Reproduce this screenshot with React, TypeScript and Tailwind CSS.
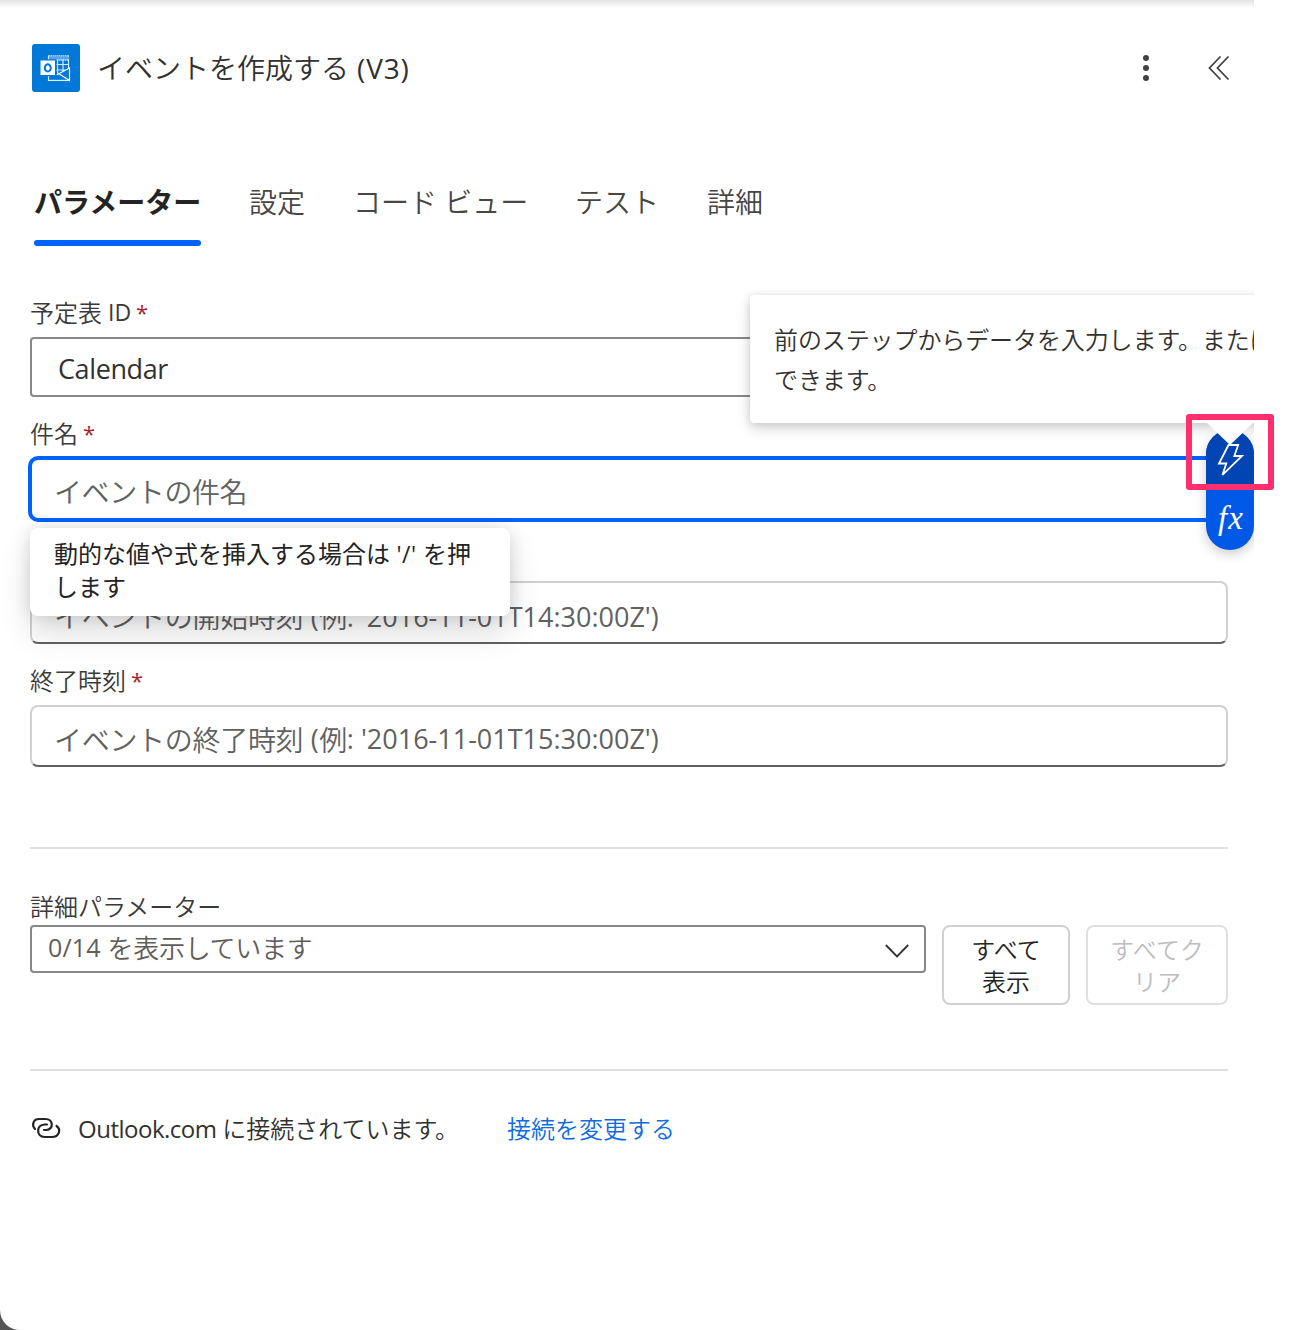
import type { ReactNode } from "react";

function Latin({ children, className = "" }: { children: ReactNode; className?: string }) {
  return <span className={`font-['Open_Sans','Noto_Sans',sans-serif] font-normal ${className}`}>{children}</span>;
}

function OutlookIcon() {
  return (
    <svg width="48" height="48" viewBox="0 0 48 48" className="shrink-0">
      <rect width="48" height="48" rx="3" fill="#0078d7" />
      <g fill="none" stroke="#d5e8fa" strokeWidth="1.2">
        <path d="M36.5 11.5V25M16.5 11.5V36.5H37.5" />
        <path d="M23 20.5H37M23 26H33M25.5 15V28M31 15V27" />
        <path d="M25 28.5L37.5 36.5V24L24.5 31" stroke="#fff" />
      </g>
      <path d="M17 12.5h20v3.2H17z" fill="#5b9fe6" />
      <path d="M16.5 11.8h20.5M16.5 16h20.5M17 36.4h20" stroke="#e8f2fc" strokeWidth="1.3" strokeDasharray="1.4 .6" />
      <rect x="7.5" y="15.2" width="17" height="17" fill="#0078d7" />
      <rect x="8.5" y="16.5" width="14.5" height="14.5" fill="#fff" />
      <ellipse cx="15.8" cy="23.9" rx="3" ry="3.6" fill="none" stroke="#0078d7" strokeWidth="2" />
    </svg>
  );
}

function Label({ children }: { children: ReactNode }) {
  return (
    <div className="flex h-8 items-center text-2xl leading-8 whitespace-pre text-[#3b3a39]">
      {children}
      <Latin className="ml-[5px] text-[22px] text-[#a4262c]">*</Latin>
    </div>
  );
}

function TimeField({ text, sample, className }: { text: string; sample: string; className: string }) {
  return (
    <div className={`flex items-center rounded-lg border-2 border-[#d1d1d1] border-b-[#616161] pl-[22px] text-[28px] whitespace-pre text-[#616161] ${className}`}>
      <span className="tracking-[-0.3px]">{text}</span>
      <Latin className="pt-0.5 text-[27px] tracking-[0.5px]"> (</Latin>
      <span className="tracking-[-0.5px]">例</span>
      <Latin className="pt-0.5 text-[27px]">{sample}</Latin>
    </div>
  );
}

export default function App() {
  return (
    <div className="relative h-[1330px] w-[1316px] overflow-hidden bg-white font-['Noto_Sans_CJK_JP',sans-serif] font-[350] text-[#323130]">
      <div className="relative h-[1330px] w-[1254px] overflow-hidden bg-[#555]">
        <main className="flex h-[1330px] flex-col rounded-bl-[20px] bg-white pr-[26px] pl-[30px]">
          <div className="absolute inset-x-0 top-0 h-2 bg-linear-to-b from-[#e3e3e3] to-white" />

          <header className="mt-11 flex h-12 items-center pl-0.5">
            <OutlookIcon />
            <h1 className="ml-[17px] flex-1 pb-0.5 text-[28px] leading-10 whitespace-pre">
              イベントを作成する<Latin className="text-[28px] tracking-[0.8px]"> (V3)</Latin>
            </h1>
            <svg width="8" height="28" viewBox="0 0 8 28" fill="#424242" className="mr-[58px]">
              <circle cx="4" cy="4" r="3" />
              <circle cx="4" cy="14" r="3" />
              <circle cx="4" cy="24" r="3" />
            </svg>
            <svg width="22" height="26" viewBox="0 0 22 26" fill="none" stroke="#424242" strokeWidth="1.8" className="mr-[-2px]">
              <path d="M12.5 1.5L1.5 13L12.5 24.5M20.5 1.5L9.5 13L20.5 24.5" />
            </svg>
          </header>

          <nav className="mt-[89px] flex h-[65px] pl-1 text-[28px] leading-10 whitespace-pre text-[#484644]">
            <div className="flex w-[167px] flex-col justify-between font-bold text-[#242424]">
              <span>パラメーター</span>
              <span className="h-1.5 rounded-full bg-[#0062ff]" />
            </div>
            <span className="ml-12 w-[104px]">設定</span>
            <span className="w-[222px]">コード<Latin> </Latin>ビュー</span>
            <span className="w-[132px]">テスト</span>
            <span>詳細</span>
          </nav>

          <section className="mt-[50px] flex flex-col">
            <Label>予定表<Latin className="text-[23px]"> ID</Latin></Label>
            <div className="mt-[9px] flex h-[60px] items-center rounded border-2 border-[#8a8886] pt-[5px] pl-[26px] text-[27px] tracking-[-0.4px]">
              <Latin>Calendar</Latin>
            </div>
            <div className="mt-5"><Label>件名</Label></div>
            <div className="relative mt-[7px] -ml-0.5 flex h-[66px] items-center rounded-[10px] border-4 border-[#0062ff] pt-[3px] pl-[22px] text-[28px] tracking-[-0.4px] text-[#616161]">
              イベントの件名
              <div className="absolute top-[68px] -left-0.5 z-10 h-[88px] w-[480px] rounded-lg bg-white pt-[9px] pl-6 text-2xl leading-8 font-normal tracking-normal whitespace-pre text-[#242424] shadow-[0_16px_32px_rgba(0,0,0,0.14),0_0_16px_rgba(0,0,0,0.12)]">
                動的な値や式を挿入する場合は<Latin className="text-[23px] tracking-[0.5px]"> '/' </Latin>を押<br />します
              </div>
            </div>
            <TimeField text="イベントの開始時刻" sample=": '2016-11-01T14:30:00Z')" className="mt-[59px] h-[63px] pt-[7px]" />
            <div className="mt-5"><Label>終了時刻</Label></div>
            <TimeField text="イベントの終了時刻" sample=": '2016-11-01T15:30:00Z')" className="mt-[9px] h-[62px] pt-[5px]" />
          </section>

          <hr className="mt-20 border-t-2 border-[#e1dfdd]" />

          <section className="mt-[41px]">
            <div className="h-[35px] text-2xl leading-8 text-[#3b3a39]">詳細パラメーター</div>
            <div className="flex items-start gap-4">
              <div className="flex h-12 flex-1 items-center rounded border-2 border-[#8a8886] pr-[15px] pb-1.5 pl-4 text-[26px] tracking-[-0.3px] whitespace-pre text-[#605e5c]">
                <Latin className="pt-1 text-[25px] tracking-[0.2px]">0/14 </Latin>を表示しています
                <svg width="24" height="14" viewBox="0 0 24 14" fill="none" stroke="#323130" strokeWidth="1.8" className="mt-[9px] ml-auto">
                  <path d="M.8 1L12 12.4L23.2 1" />
                </svg>
              </div>
              <button className="h-20 w-32 rounded-lg border-2 border-[#d1d1d1] pb-px text-2xl leading-8 text-[#242424]">すべて<br />表示</button>
              <button className="h-20 w-[142px] rounded-lg border-2 border-[#e0e0e0] pb-px text-2xl leading-8 text-[#bdbdbd]">すべてク<br />リア</button>
            </div>
          </section>

          <hr className="mt-16 border-t-2 border-[#e1dfdd]" />

          <footer className="mt-[41px] flex h-8 items-center text-2xl leading-8 whitespace-pre">
            <svg width="32" height="24" viewBox="0 0 32 24" fill="none" stroke="#242424" strokeWidth="2.2" strokeLinecap="round" strokeLinejoin="round">
              <path d="M5 13C1.5 9.5 3 3 9 3H15.5C23.5 3 24 13.5 16.5 14H14" />
              <path d="M17 8.5H14.5C6 9 6 20.5 14.5 21H22C29 21 31.5 13.5 26.5 10" />
            </svg>
            <span className="ml-4 w-[429px]"><Latin className="tracking-[-0.5px]">Outlook.com </Latin>に接続されています。</span>
            <a className="text-[#0f6cdf]">接続を変更する</a>
          </footer>
        </main>

        {/* Token picker buttons */}
        <div className="absolute top-[430px] left-[1206px] flex h-[120px] w-12 flex-col overflow-hidden rounded-full bg-[#0059e6] shadow-[0_4px_12px_rgba(0,0,0,0.2)]">
          <div className="h-[60px] bg-[#0045b3]">
            <svg width="48" height="60" viewBox="0 0 48 60" fill="none" stroke="#fff" strokeWidth="1.8" strokeLinejoin="miter">
              <path d="M22.5 15H32.2L28.3 26H36L16.5 44.8L20.3 33.5H13Z" />
            </svg>
          </div>
          <div className="h-[60px] pl-0.5 text-center font-['Liberation_Serif',serif] text-[33px] leading-[57px] font-normal tracking-[1px] text-white italic">fx</div>
        </div>

        <div className="absolute top-[295px] left-[750px] h-32 w-[640px] rounded bg-white pt-6 pl-6 text-2xl leading-10 tracking-[-0.1px] whitespace-pre shadow-[0_6px_14px_rgba(0,0,0,0.14),0_1px_8px_rgba(0,0,0,0.12)]">
          前のステップからデータを入力します。または式を追加<br />できます。
          <svg width="48" height="24" viewBox="0 0 48 24" className="absolute top-[127px] left-[456px]">
            <path d="M0 0H48L24 23Z" fill="#fff" />
          </svg>
        </div>
      </div>
      <div className="absolute top-[414px] left-[1186px] h-[76px] w-[88px] rounded-[3px] border-6 border-[#ff2f6d]" />
    </div>
  );
}
